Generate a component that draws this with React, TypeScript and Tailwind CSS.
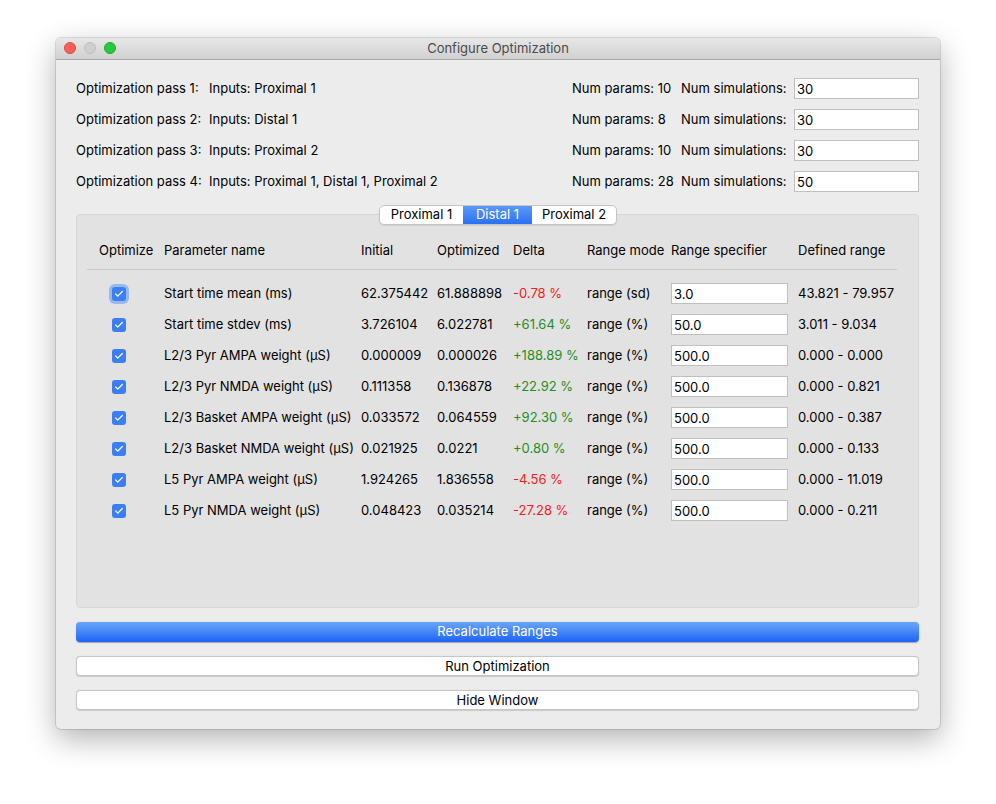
import { Check } from 'lucide-react';

const passes = [
  { label: 'Optimization pass 1:', inputs: 'Inputs: Proximal 1', params: 'Num params: 10', sims: '30' },
  { label: 'Optimization pass 2:', inputs: 'Inputs: Distal 1', params: 'Num params: 8', sims: '30' },
  { label: 'Optimization pass 3:', inputs: 'Inputs: Proximal 2', params: 'Num params: 10', sims: '30' },
  { label: 'Optimization pass 4:', inputs: 'Inputs: Proximal 1, Distal 1, Proximal 2', params: 'Num params: 28', sims: '50' },
];

const params = [
  { name: 'Start time mean (ms)', initial: '62.375442', optimized: '61.888898', delta: '-0.78 %', mode: 'range (sd)', spec: '3.0', range: '43.821 - 79.957', focus: true },
  { name: 'Start time stdev (ms)', initial: '3.726104', optimized: '6.022781', delta: '+61.64 %', mode: 'range (%)', spec: '50.0', range: '3.011 - 9.034' },
  { name: 'L2/3 Pyr AMPA weight (µS)', initial: '0.000009', optimized: '0.000026', delta: '+188.89 %', mode: 'range (%)', spec: '500.0', range: '0.000 - 0.000' },
  { name: 'L2/3 Pyr NMDA weight (µS)', initial: '0.111358', optimized: '0.136878', delta: '+22.92 %', mode: 'range (%)', spec: '500.0', range: '0.000 - 0.821' },
  { name: 'L2/3 Basket AMPA weight (µS)', initial: '0.033572', optimized: '0.064559', delta: '+92.30 %', mode: 'range (%)', spec: '500.0', range: '0.000 - 0.387' },
  { name: 'L2/3 Basket NMDA weight (µS)', initial: '0.021925', optimized: '0.0221', delta: '+0.80 %', mode: 'range (%)', spec: '500.0', range: '0.000 - 0.133' },
  { name: 'L5 Pyr AMPA weight (µS)', initial: '1.924265', optimized: '1.836558', delta: '-4.56 %', mode: 'range (%)', spec: '500.0', range: '0.000 - 11.019' },
  { name: 'L5 Pyr NMDA weight (µS)', initial: '0.048423', optimized: '0.035214', delta: '-27.28 %', mode: 'range (%)', spec: '500.0', range: '0.000 - 0.211' },
];

const cols = 'grid grid-cols-[65px_197px_76px_76px_74px_84px_127px_1fr] items-center';

export default function App() {
  return (
    <div
      className="w-[996px] h-[804px] bg-white pt-[38px] pl-[56px] text-[13px] text-[#000]"
      style={{ fontFamily: 'Inter, "Liberation Sans", sans-serif' }}
    >
      <div className="w-[884px] h-[691px] bg-[#ececec] rounded-[5px] overflow-hidden shadow-[0_10px_30px_rgba(0,0,0,0.3),0_0_0_1px_rgba(0,0,0,0.12)] flex flex-col">
        {/* Title bar */}
        <div className="relative h-[22px] bg-gradient-to-b from-[#e7e7e7] to-[#d1d1d1] border-b border-[#a9a9a9] flex items-center justify-center pt-[1px]">
          <div className="absolute left-[8px] top-[4px] flex gap-[8px]">
            <span className="w-[12px] h-[12px] rounded-full bg-[#fe5f57] border border-[#e0443e]" />
            <span className="w-[12px] h-[12px] rounded-full bg-[#cfcfcf] border border-[#bdbdbd]" />
            <span className="w-[12px] h-[12px] rounded-full bg-[#28c840] border border-[#1aab29]" />
          </div>
          <span className="text-[13px] text-[#4a4a4a]">Configure Optimization</span>
        </div>

        <div className="flex-1 flex flex-col pl-[20px] pr-[21px] pt-[13px]">
          {/* Passes */}
          <div className="flex flex-col">
            {passes.map((p) => (
              <div key={p.label} className="h-[31px] flex items-center">
                <span className="w-[133px]">{p.label}</span>
                <span className="flex-1">{p.inputs}</span>
                <span className="w-[109px]">{p.params}</span>
                <span className="w-[113px]">Num simulations:</span>
                <div className="w-[125px] h-[21px] bg-white border border-[#bfbfbf] pl-[2px] flex items-center pt-[2px]">
                  {p.sims}
                </div>
              </div>
            ))}
          </div>

          {/* Tabs */}
          <div className="mt-[8px] flex flex-col">
            <div className="relative z-10 flex justify-center">
              <div className="flex h-[20px] rounded-[5px] border border-[#c4c4c4] bg-white overflow-hidden shadow-[0_1px_1px_rgba(0,0,0,0.08)] ml-[1px]">
                <div className="w-[83px] flex items-center justify-center">Proximal 1</div>
                <div className="w-[69px] flex items-center justify-center text-white bg-gradient-to-b from-[#5c98f7] to-[#2a6ff5]">Distal 1</div>
                <div className="w-[84px] flex items-center justify-center">Proximal 2</div>
              </div>
            </div>
            <div className="-mt-[11px] h-[394px] bg-[#e2e2e2] border border-[#d6d6d6] rounded-[4px] px-[10px] pt-[20px]">
              <div className={`${cols} h-[31px] pl-[12px]`}>
                <span>Optimize</span>
                <span>Parameter name</span>
                <span>Initial</span>
                <span>Optimized</span>
                <span>Delta</span>
                <span>Range mode</span>
                <span>Range specifier</span>
                <span>Defined range</span>
              </div>
              <div className="mt-[3px] mr-[11px] h-px bg-[#c9c9c9]" />
              <div className="mt-[8px] flex flex-col">
                {params.map((r) => (
                  <div key={r.name} className={`${cols} h-[31px] pl-[12px]`}>
                    <div className="pl-[13px]">
                      <span
                        className={`w-[14px] h-[14px] rounded-[3px] bg-[#3b7ef6] flex items-center justify-center ${
                          r.focus ? 'shadow-[0_0_0_3px_rgba(90,150,245,0.55)]' : ''
                        }`}
                      >
                        <Check className="w-[10px] h-[10px] text-white" strokeWidth={3} />
                      </span>
                    </div>
                    <span>{r.name}</span>
                    <span>{r.initial}</span>
                    <span>{r.optimized}</span>
                    <span className={r.delta.startsWith('-') ? 'text-[#f31c1c]' : 'text-[#1f8f1f]'}>{r.delta}</span>
                    <span>{r.mode}</span>
                    <div className="w-[117px] h-[21px] bg-white border border-[#bfbfbf] pl-[2px] flex items-center pt-[2px]">
                      {r.spec}
                    </div>
                    <span>{r.range}</span>
                  </div>
                ))}
              </div>
            </div>
          </div>

          {/* Buttons */}
          <div className="mt-[14px] flex flex-col gap-[14px]">
            <button className="h-[20px] rounded-[4px] bg-gradient-to-b from-[#6aa5f8] to-[#1d62f5] text-white shadow-[0_0.5px_1px_rgba(0,0,0,0.3)]">
              Recalculate Ranges
            </button>
            <button className="h-[20px] rounded-[4px] bg-white border border-[#c6c6c6] shadow-[0_0.5px_1px_rgba(0,0,0,0.15)]">
              Run Optimization
            </button>
            <button className="h-[20px] rounded-[4px] bg-white border border-[#c6c6c6] shadow-[0_0.5px_1px_rgba(0,0,0,0.15)]">
              Hide Window
            </button>
          </div>
        </div>
      </div>
    </div>
  );
}
